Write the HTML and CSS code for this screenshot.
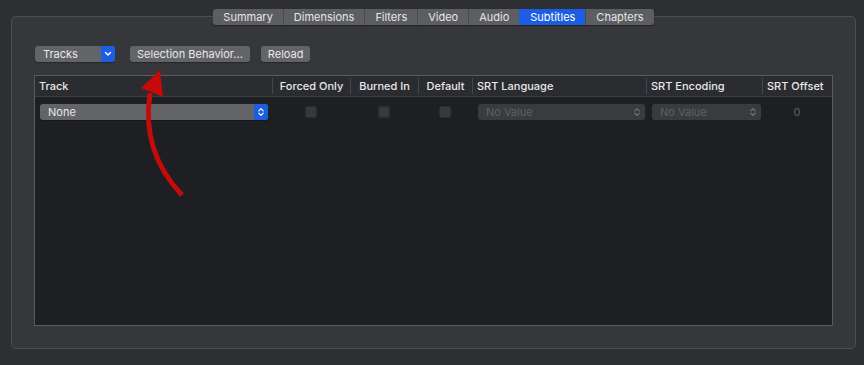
FILE: index.html
```html
<!DOCTYPE html>
<html lang="en">

<head>
  <meta charset="UTF-8">
  <meta name="viewport" content="width=device-width, initial-scale=1.0">
  <title>Subtitles</title>

  <link rel="stylesheet" href="styles.css">
</head>

<body>
  <main class="panel">
    <nav class="tabs">
      <span class="tab">Summary</span>
      <span class="tab">Dimensions</span>
      <span class="tab">Filters</span>
      <span class="tab">Video</span>
      <span class="tab">Audio</span>
      <span class="tab active">Subtitles</span>
      <span class="tab">Chapters</span>
    </nav>

    <section class="toolbar">
      <div class="popup tracks">
        <span class="popup-label">Tracks</span>
        <span class="popup-arrow">
          <svg width="8" height="6" viewBox="0 0 8 6"><path d="M1.5 1.5 L4 4 L6.5 1.5" fill="none" stroke="#fff" stroke-width="1.4" stroke-linecap="round" stroke-linejoin="round"/></svg>
        </span>
      </div>
      <button class="btn selection">Selection Behavior...</button>
      <button class="btn">Reload</button>
    </section>

    <section class="table">
      <div class="thead">
        <div class="th c-track">Track</div>
        <div class="th c-forced center">Forced Only</div>
        <div class="th c-burned center">Burned In</div>
        <div class="th c-default center">Default</div>
        <div class="th c-lang">SRT Language</div>
        <div class="th c-enc">SRT Encoding</div>
        <div class="th c-offset">SRT Offset</div>
      </div>
      <div class="row">
        <div class="td c-track">
          <div class="popup none">
            <span class="popup-label">None</span>
            <span class="popup-arrow">
              <svg width="8" height="10" viewBox="0 0 8 10"><path d="M1.8 3.8 L4 1.6 L6.2 3.8 M1.8 6.2 L4 8.4 L6.2 6.2" fill="none" stroke="#fff" stroke-width="1.2" stroke-linecap="round" stroke-linejoin="round"/></svg>
            </span>
          </div>
        </div>
        <div class="td c-forced center"><span class="check"></span></div>
        <div class="td c-burned center"><span class="check"></span></div>
        <div class="td c-default center"><span class="check"></span></div>
        <div class="td c-lang">
          <div class="popup disabled lang">
            <span class="popup-label">No Value</span>
            <svg width="8" height="10" viewBox="0 0 8 10"><path d="M1.8 3.8 L4 1.6 L6.2 3.8 M1.8 6.2 L4 8.4 L6.2 6.2" fill="none" stroke="#76777a" stroke-width="1.1" stroke-linecap="round" stroke-linejoin="round"/></svg>
          </div>
        </div>
        <div class="td c-enc">
          <div class="popup disabled enc">
            <span class="popup-label">No Value</span>
            <svg width="8" height="10" viewBox="0 0 8 10"><path d="M1.8 3.8 L4 1.6 L6.2 3.8 M1.8 6.2 L4 8.4 L6.2 6.2" fill="none" stroke="#76777a" stroke-width="1.1" stroke-linecap="round" stroke-linejoin="round"/></svg>
          </div>
        </div>
        <div class="td c-offset center offset">0</div>
      </div>
    </section>
  </main>

  <!-- annotation arrow drawn over the window -->
  <svg class="arrow" width="864" height="365" viewBox="0 0 864 365">
    <path d="M182 195 Q141 152 150 93" fill="none" stroke="#c40a0a" stroke-width="5"/>
    <polygon points="160,70 141,88 163,97" fill="#c40a0a"/>
  </svg>
</body>

</html>
```

FILE: styles.css
```css
body {
  background: #2e2f33;
  color: #dcdcdd;
  font-family: "Inter", "Liberation Sans", sans-serif;
  font-size: 11px;
  height: 365px;
  margin: 0;
  overflow: hidden;
  position: relative;
}

.panel {
  background: #36373b;
  border: 1px solid #4c4d51;
  border-radius: 5px;
  box-sizing: border-box;
  height: 333px;
  margin: 16px 0 0 11px;
  width: 845px;
}

.tabs {
  background: #5d5e61;
  border-radius: 3px;
  box-shadow: 0 1px 1px rgba(0, 0, 0, 0.35);
  display: flex;
  height: 16px;
  margin: -8px auto 0;
  overflow: hidden;
  width: fit-content;
}

.tab {
  border-left: 1px solid #4a4b4e;
  color: #e6e6e7;
  line-height: 16px;
  padding: 0 10px;
}

.tab:first-child {
  border-left: none;
}

.tab.active {
  background: #1d5ee0;
  border-left-color: #1d5ee0;
  color: #fff;
}

.toolbar {
  align-items: center;
  display: flex;
  gap: 11px;
  margin: 21px 0 0 23px;
}

.popup {
  align-items: center;
  background: #636467;
  border-radius: 3px;
  box-shadow: 0 1px 1px rgba(0, 0, 0, 0.3);
  color: #e8e8e9;
  display: flex;
  height: 16px;
  overflow: hidden;
}

.popup-label {
  flex: 1;
  padding-left: 8px;
}

.popup-arrow {
  align-items: center;
  background: #1d5ee0;
  display: flex;
  height: 16px;
  justify-content: center;
  width: 14px;
}

.tracks {
  width: 80px;
}

.btn {
  background: #636467;
  border: none;
  border-radius: 3px;
  box-shadow: 0 1px 1px rgba(0, 0, 0, 0.3);
  color: #e8e8e9;
  font-family: inherit;
  font-size: 11px;
  height: 16px;
  padding: 0 7px;
}

.selection {
  margin-left: 4px;
}

.table {
  background: #1e1f23;
  border: 1px solid #5a5b5e;
  box-sizing: border-box;
  height: 251px;
  margin: 13px 0 0 22px;
  width: 799px;
}

.thead,
.row {
  display: grid;
  grid-template-columns: 237px 78px 68px 54px 174px 116px 70px;
}

.thead {
  background: #2b2c30;
  border-bottom: 1px solid #3e3f43;
  height: 20px;
}

.th {
  align-items: center;
  border-left: 1px solid #46474b;
  color: #e8e8e9;
  display: flex;
  font-weight: 500;
  margin: 2px 0;
  padding-left: 4px;
}

.th:first-child {
  border-left: none;
}

.th.center {
  justify-content: center;
  padding-left: 0;
}

.row {
  height: 30px;
}

.td {
  align-items: center;
  display: flex;
}

.td.center {
  justify-content: center;
}

.none {
  margin-left: 5px;
  margin-top: -1px;
  width: 228px;
}

.check {
  background: #38393d;
  border-radius: 3px;
  box-shadow: inset 0 0 0 1px #2c2d31;
  height: 12px;
  width: 12px;
}

.disabled {
  background: #3a3b3f;
  box-shadow: none;
  color: #5f6064;
  padding-right: 4px;
}

.lang {
  margin-left: 6px;
  width: 163px;
}

.enc {
  margin-left: 6px;
  width: 105px;
}

.offset {
  color: #5f6064;
}

.arrow {
  left: 0;
  pointer-events: none;
  position: absolute;
  top: 0;
}
```
